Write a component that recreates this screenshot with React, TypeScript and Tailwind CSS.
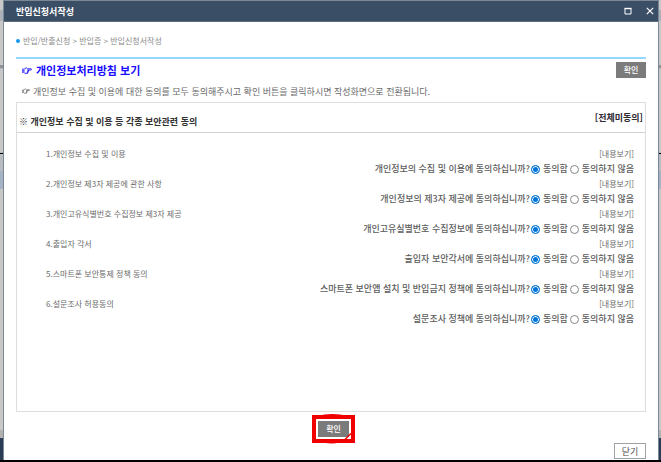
import { useState } from 'react';

interface ConsentItem {
  id: string;
  title: string;
  question: string;
}

const ITEMS: ConsentItem[] = [
  { id: 'privacy', title: '1.개인정보 수집 및 이용', question: '개인정보의 수집 및 이용에 동의하십니까?' },
  { id: 'third-party', title: '2.개인정보 제3자 제공에 관한 사항', question: '개인정보의 제3자 제공에 동의하십니까?' },
  { id: 'unique-id', title: '3.개인고유식별번호 수집정보 제3자 제공', question: '개인고유실별번호 수집정보에 동의하십니까?' },
  { id: 'pledge', title: '4.출입자 각서', question: '출입자 보안각서에 동의하십니까?' },
  { id: 'smartphone', title: '5.스마트폰 보안통제 정책 동의', question: '스마트폰 보안앱 설치 및 반입금지 정책에 동의하십니까?' },
  { id: 'survey', title: '6.설문조사 허용동의', question: '설문조사 정책에 동의하십니까?' },
];

const radioClass =
  'mt-[2px] h-[9px] w-[9px] shrink-0 appearance-none rounded-full border border-[#858585] bg-white checked:border-[#0075d7] checked:bg-[#0075d7] checked:shadow-[inset_0_0_0_1px_#fff]';

// Slice of the dimmed page that shows on either side of the dialog
function Backdrop({ className }: { className: string }) {
  return (
    <div aria-hidden="true" className={`flex shrink-0 flex-col bg-[#c8c8c8] ${className}`}>
      <div className="h-[10px]" />
      <div className="h-[11px] bg-[#acb0b8]" />
      <div className="h-[44px]" />
      <div className="h-[3px] bg-[#8e9296]" />
      <div className="h-[85px] border-y border-[#b4b8bc]" />
      <div className="h-px bg-black" />
      <div className="h-[17px] bg-[#b9bcc0]" />
      <div className="h-[18px] bg-[#a6b3c4]" />
      <div className="grow" />
      <div className="h-[8px] bg-[#b2b2b2]" />
      <div className="h-[22px] bg-[#2b3d55]" />
    </div>
  );
}

function PointingHand({ className }: { className: string }) {
  return (
    <svg viewBox="0 0 10 7" className={`shrink-0 ${className}`} fill="none" stroke="currentColor" aria-hidden="true">
      <path d="M2.6 1.6L4.4.9l1 .9h3.8q.9.6 0 1.2H5.4M6.6 3v1.2H5M6.2 4.2v1.1H4.8M5.6 5.3v1H2.6" strokeWidth=".9" />
      <path d="M0 1.6h2.6v4.4H0z" fill="currentColor" stroke="none" opacity=".65" />
    </svg>
  );
}

function ConsentRow({ item }: { item: ConsentItem }) {
  const [agreed, setAgreed] = useState(true);

  return (
    <li>
      <div className="flex h-[15px] items-center justify-between pl-[29px] text-[8px] text-[#6c6c6c]">
        <span>{item.title}</span>
        <a href={`#${item.id}`}>[내용보기]</a>
      </div>
      <div
        role="radiogroup"
        aria-labelledby={`${item.id}-question`}
        className="flex h-[15px] items-center justify-end text-[9px] font-medium text-[#5c5c5c]"
      >
        <span id={`${item.id}-question`} className="mr-px">
          {item.question}
        </span>
        <label className="mr-[2px] flex items-center gap-[3px]">
          <input type="radio" name={item.id} className={radioClass} checked={agreed} onChange={() => setAgreed(true)} />
          동의함
        </label>
        <label className="flex items-center gap-[3px]">
          <input type="radio" name={item.id} className={radioClass} checked={!agreed} onChange={() => setAgreed(false)} />
          동의하지 않음
        </label>
      </div>
    </li>
  );
}

export default function App() {
  return (
    <div
      lang="ko"
      className="flex min-h-screen border-b-2 border-black bg-white font-['Noto_Sans_CJK_KR',sans-serif] leading-none whitespace-nowrap"
    >
      <Backdrop className="w-[3px]" />
      <section
        role="dialog"
        aria-labelledby="dialog-title"
        className="flex min-w-0 grow flex-col border-x border-t border-[#7c8894]"
      >
        <header className="flex h-[21px] items-center justify-between border-b border-[#5d6b7b] bg-[#3a4e66] pr-[4px] pl-[12px] text-white">
          <h1 id="dialog-title" className="text-[9px] font-bold">
            반입신청서작성
          </h1>
          <div className="flex gap-[14px]">
            <button type="button" aria-label="최대화">
              <svg viewBox="0 0 8 8" className="h-[8px] w-[8px]" fill="none" stroke="currentColor">
                <path d="M1 1.5h6v5.5H1z" />
                <path d="M.5 1.5h7" strokeWidth="1.4" />
              </svg>
            </button>
            <button type="button" aria-label="창 닫기">
              <svg viewBox="0 0 8 8" className="h-[8px] w-[8px]" fill="none" stroke="currentColor" strokeWidth="1.2">
                <path d="M.8.8l6.4 6.4M7.2.8L.8 7.2" />
              </svg>
            </button>
          </div>
        </header>

        <main className="flex grow flex-col px-[12px]">
          <nav aria-label="현재 위치" className="flex h-[37px] items-center gap-[3px] border-b-2 border-[#95d7fd] pt-[3px]">
            <span className="h-[4px] w-[4px] rounded-full bg-[#1298f2]" />
            <span className="text-[8px] text-[#8a8a8a]">반입/반출신청 &gt; 반입증 &gt; 반입신청서작성</span>
          </nav>

          <div className="flex h-[21px] items-center justify-between pl-[6px]">
            <h2 className="flex items-center gap-[4px] pt-[2px] text-[11px] font-bold text-[#1a0dff]">
              <PointingHand className="h-[7px] w-[10px]" />
              개인정보처리방침 보기
            </h2>
            <button type="button" className="h-[16px] w-[30px] bg-[#7b7b7b] text-[8px] font-medium text-white">
              확인
            </button>
          </div>

          <p className="flex h-[22px] items-center gap-[3px] pl-[6px] text-[9px] text-[#6a6a6a]">
            <PointingHand className="h-[6px] w-[8px]" />
            개인정보 수집 및 이용에 대한 동의를 모두 동의해주시고 확인 버튼을 클릭하시면 작성화면으로 전환됩니다.
          </p>

          <div className="grow border border-[#dedede]">
            <div className="flex h-[30px] items-end justify-between border-b border-[#d2d2d2] pr-[2px] pb-[6px] pl-[2px] text-[#333]">
              <h3 className="text-[9px] font-bold">※ 개인정보 수집 및 이용 등 각종 보안관련 동의</h3>
              <button type="button" className="pb-[4px] text-[9px] font-bold text-[#2e2a33]">
                [전체미동의]
              </button>
            </div>
            <ul className="pt-[13px] pr-[11px]">
              {ITEMS.map((item) => (
                <ConsentRow key={item.id} item={item} />
              ))}
            </ul>
          </div>

          <div className="flex justify-center pt-[3px]">
            <div className="relative mr-[-5px] flex border-4 border-[#f00000] p-[2px]">
              <button type="button" className="h-[16px] w-[31px] bg-[#7b7b7b] text-[8px] font-medium text-white">
                확인
              </button>
              {/* hand-drawn ring showing behind the square marker */}
              <svg
                viewBox="0 0 43 32"
                className="pointer-events-none absolute -top-[6px] -left-[4px] h-[32px] w-[43px]"
                fill="#f00000"
                aria-hidden="true"
              >
                <path d="M5 3Q20-1 36 3zM11 29Q20 32 28 29z" />
                <path d="M33 26.500L39 20.500" stroke="#f00000" strokeWidth="1.500" />
              </svg>
            </div>
          </div>
          <div className="flex justify-end pb-[1px]">
            <button type="button" className="h-[16px] w-[32px] border border-[#a2a2a2] text-[9px] text-[#505050]">
              닫기
            </button>
          </div>
        </main>
      </section>
      <Backdrop className="w-[2px]" />
    </div>
  );
}
